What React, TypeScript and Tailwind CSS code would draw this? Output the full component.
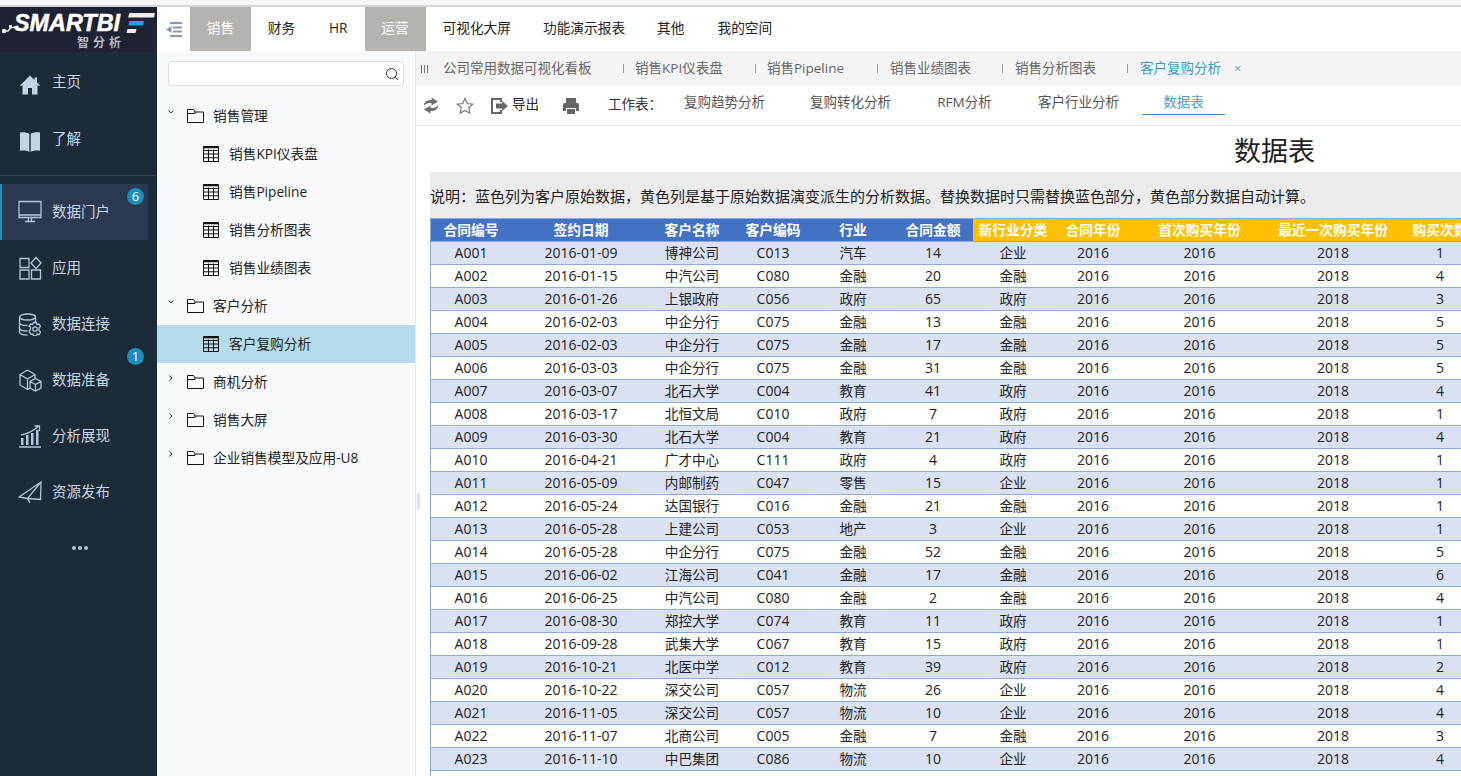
import React from "react";

const FONT = { fontFamily: '"Open Sans","Noto Sans CJK SC",sans-serif' };

const raw = `A001|01-09|博神公司|C013|汽车|14|企业|1
A002|01-15|中汽公司|C080|金融|20|金融|4
A003|01-26|上银政府|C056|政府|65|政府|3
A004|02-03|中企分行|C075|金融|13|金融|5
A005|02-03|中企分行|C075|金融|17|金融|5
A006|03-03|中企分行|C075|金融|31|金融|5
A007|03-07|北石大学|C004|教育|41|政府|4
A008|03-17|北恒文局|C010|政府|7|政府|1
A009|03-30|北石大学|C004|教育|21|政府|4
A010|04-21|广才中心|C111|政府|4|政府|1
A011|05-09|内邮制药|C047|零售|15|企业|1
A012|05-24|达国银行|C016|金融|21|金融|1
A013|05-28|上建公司|C053|地产|3|企业|1
A014|05-28|中企分行|C075|金融|52|金融|5
A015|06-02|江海公司|C041|金融|17|金融|6
A016|06-25|中汽公司|C080|金融|2|金融|4
A017|08-30|郑控大学|C074|教育|11|政府|1
A018|09-28|武集大学|C067|教育|15|政府|1
A019|10-21|北医中学|C012|教育|39|政府|2
A020|10-22|深交公司|C057|物流|26|企业|4
A021|11-05|深交公司|C057|物流|10|企业|4
A022|11-07|北商公司|C005|金融|7|金融|3
A023|11-10|中巴集团|C086|物流|10|企业|4`;
const rows = raw.split("\n").map((l) => l.split("|"));

const S = { fill: "none", stroke: "#b3c6da", strokeWidth: 1.3 } as const;
const Ic = ({ children }: { children: React.ReactNode }) => (
  <svg width="24" height="24" viewBox="0 0 24 24" className="shrink-0">{children}</svg>
);

const navIcons: Record<string, React.ReactNode> = {
  home: <Ic><path d="M12 2.500 2 12.500l.8.8L4.500 12v9.500h5.500V15h4v6.500h5.500V12l1.700 1.300.8-.8-3-2.900V4.500h-2.500v2.600z" fill="#c3d3e4" /></Ic>,
  book: <Ic><path d="M2 2.500c3.500-.6 7 0 9.300 1.200V22C9 20.800 5.500 20.300 2 20.800zM22 2.500c-3.500-.6-7 0-9.300 1.200V22c2.300-1.200 5.800-1.700 9.300-1.200z" fill="#c3d3e4" /></Ic>,
  monitor: <Ic><path d="M1 1.500h22v16H1zM1 15h22M7 21.500h10M10.500 18v3.500M13.500 18v3.500" {...S} /></Ic>,
  apps: <Ic><g {...S}><path d="M2 2.500h9v9H2zM2 14h9v9H2zM13.500 14h9v9h-9zM18 1.500l5 5.500-5 5.500-5-5.500z" /></g></Ic>,
  db: <Ic><g {...S}><ellipse cx="9.500" cy="5" rx="8" ry="3" /><path d="M1.500 5v15c0 1.700 3.500 3 8 3M1.500 10.500c0 1.700 3.500 3 8 3M1.500 16c0 1.700 3.500 3 8 3M17.500 5v5" /><circle cx="17" cy="17" r="2.200" /><path d="M15.500 10.500h3l.5 2 2-.5 1.500 2.500-1.500 1.500v2.500l1.500 1.500-1.500 2.500-2-.5-.5 2h-3l-.5-2-2 .5L11 19l1.500-1.500V15L11 14.500l1.500-2.500 2 .5z" /></g></Ic>,
  box: <Ic><g {...S}><path d="M9.500 2 17 6.500V10M9.500 2 2 6.500v10.500l7.500 4.500 2-1.200M2 6.500l7.500 4.500 7.500-4.500M9.500 11v10.500M17.500 10.500l5.500 3v6.500l-5.500 3-5.500-3v-6.500zM12 13.500l5.500 3 5.500-3M17.500 16.500v6.500" /></g></Ic>,
  chart: <Ic><g fill="#b3c6da"><rect x="3" y="14" width="2.500" height="7" /><rect x="8" y="11" width="2.500" height="10" /><rect x="13" y="9" width="2.500" height="12" /><rect x="18" y="6" width="2.500" height="15" /></g><path d="M1 23h22M3 11c6-1 12-4 18-9M16.500 2H21.500V7" {...S} /></Ic>,
  send: <Ic><path d="M23 2 1 17l8.500 1.500L22.500 19.500zM23 2 9.500 18.500 12 23" {...S} /></Ic>,
};

const items = [
  ["monitor", "数据门户", "6"],
  ["apps", "应用"],
  ["db", "数据连接"],
  ["box", "数据准备", "1"],
  ["chart", "分析展现"],
  ["send", "资源发布"],
];

function NavItem({ icon, label, badge, active, h, drop }: { icon: string; label: string; badge?: string; active?: boolean; h: string; drop?: boolean }) {
  return (
    <div className={`relative flex items-center gap-[10px] pl-[18px] text-[14.500px] text-[#c9d5e2] ${h} ${active ? "w-[148px] bg-[#2a3850] border-l-2 border-[#1f8fc0] !pl-[16px]" : ""}`}>
      <span className={`flex ${drop ? "mt-[4px]" : ""}`}>{navIcons[icon]}</span>
      <span className="-mt-px">{label}</span>
      {badge && (
        <span className={`absolute left-[127px] flex h-[17px] w-[17px] items-center justify-center rounded-full bg-[#1b8ebf] text-[13px] text-white ${active ? "top-[4px] !left-[125px]" : "top-[-4px]"}`}>{badge}</span>
      )}
    </div>
  );
}

const Folder = () => (
  <svg width="17" height="14" viewBox="0 0 17 14" className="shrink-0"><path d="M.5 13.500V.5h6l1.500 2.500h8.500v10.500zM.5 4.500h7.500L8 3" fill="none" stroke="#111" strokeWidth="1" /></svg>
);
const GridIc = () => (
  <svg width="16" height="16" viewBox="0 0 16 16" className="shrink-0"><path d="M.5.5h15v15H.5zM.5 4.500h15M.5 8h15M.5 11.750h15M5.500 3.500v12M10.500 3.500v12" fill="none" stroke="#111" strokeWidth="1" /><path d="M.5 1.500h15" stroke="#111" strokeWidth="1.500" /></svg>
);
const Chev = ({ open }: { open?: boolean }) => (
  <svg width="8" height="8" viewBox="0 0 8 8" className="shrink-0">
    {open ? <path d="M1.500 2.500 4 5l2.500-2.500" fill="none" stroke="#333" strokeWidth="1" /> : <path d="M2.500 1.500 5 4 2.500 6.500" fill="none" stroke="#333" strokeWidth="1" />}
  </svg>
);

function FolderRow({ label, open }: { label: string; open?: boolean }) {
  return (
    <div className="flex h-[38px] items-center pl-[10px] text-[13.700px] text-[#222]">
      <span className="-mt-[9px] mr-[12px] flex"><Chev open={open} /></span>
      <Folder />
      <span className="ml-[9px]">{label}</span>
    </div>
  );
}
function LeafRow({ label, active }: { label: string; active?: boolean }) {
  return (
    <div className={`flex h-[38px] items-center gap-[10px] pl-[46px] text-[13.700px] text-[#222] ${active ? "bg-[#b5dcea]" : ""}`}>
      <GridIc />
      <span>{label}</span>
    </div>
  );
}

const topTabs: [string, string, boolean?][] = [
  ["销售", "px-[16.800px]", true],
  ["财务", "px-[16.800px]"],
  ["HR", "px-[17px]"],
  ["运营", "px-[16.800px]", true],
  ["可视化大屏", "pl-[17px] pr-[16px]"],
  ["功能演示报表", "px-[16px]"],
  ["其他", "pl-[16px] pr-[17px]"],
  ["我的空间", "px-[16px]"],
];
const docTabs: [string, string, string][] = [
  ["公司常用数据可视化看板", "w-[149px]", "mr-[11px]"],
  ["销售KPI仪表盘", "w-[89px]", "mr-[11px]"],
  ["销售Pipeline", "w-[79px]", "mr-[12px]"],
  ["销售业绩图表", "w-[81px]", "mr-[12px]"],
  ["销售分析图表", "w-[81px]", "mr-[12px]"],
];
const headA = ["合同编号", "签约日期", "客户名称", "客户编码", "行业", "合同金额"];
const headB = ["新行业分类", "合同年份", "首次购买年份", "最近一次购买年份", "购买次数"];
const widths = [80, 140, 82, 80, 80, 80, 80, 80, 133, 134, 80];
const td = "border-b border-[#8ea9db] p-0 pb-px leading-[20px]";
const tdc = "border-b border-[#8ea9db] p-0 pb-px leading-[20px] text-[13.600px]";

export default function App() {
  return (
    <div style={FONT} className="relative flex h-[776px] w-[1461px] flex-col overflow-hidden bg-white [text-spacing-trim:space-all]">
      <div className="h-[7px] shrink-0 border-b-2 border-[#d6d6d6] bg-[#f8f8f8]" />
      <div className="flex min-h-0 flex-1">
        {/* sidebar */}
        <aside className="flex w-[157px] shrink-0 flex-col bg-[#1c2b38]">
          <div className="h-[45px] shrink-0 bg-[#1e2233]">
            <svg width="157" height="45" viewBox="0 0 157 45">
              <text x="14" y="24" fill="#fff" stroke="#fff" strokeWidth=".5" fontSize="23" fontWeight="700" fontStyle="italic" fontFamily="Liberation Sans, sans-serif" textLength="106" lengthAdjust="spacingAndGlyphs">SMARTBI</text>
              <path d="M3 24h5l3-3.500h4" fill="none" stroke="#e6e6e6" strokeWidth="1.500" />
              <rect x="2" y="22" width="4" height="4" rx="1" fill="#eee" />
              <rect x="9" y="18" width="3" height="3" rx="1" fill="#eee" />
              <path d="M129.500 6h25.500l-1 4.500h-26z" fill="#eee" />
              <path d="M129.500 14h14.500l-1 4.500h-14.500z" fill="#14a5e8" />
              <path d="M127.500 22h9l-1 4h-9z" fill="#eee" />
              <text x="77" y="40" fill="#b9bcc4" fontSize="12" fontWeight="700" letterSpacing="4" fontFamily="Noto Sans CJK SC, sans-serif">智分析</text>
            </svg>
          </div>
          <div className="mt-[2px]">
            <NavItem icon="home" label="主页" h="h-[57px]" drop />
            <NavItem icon="book" label="了解" h="h-[57px]" drop />
          </div>
          <div className="mt-[7px] mb-[8px] h-px bg-[#33424f]" />
          {items.map(([i, l, b], n) => (
            <NavItem key={l} icon={i} label={l} badge={b} active={n === 0} h="h-[56px]" />
          ))}
          <div className="flex h-[56px] items-center justify-center gap-[2px] pl-[3px]">
            {[0, 1, 2].map((i) => <span key={i} className="h-[4px] w-[4px] rounded-full bg-[#b3c6da]" />)}
          </div>
        </aside>

        <div className="flex min-w-0 flex-1 flex-col">
          {/* top nav */}
          <div className="flex h-[44px] shrink-0 items-stretch">
            <div className="flex w-[33px] items-center justify-center">
              <svg width="16" height="17" viewBox="0 0 16 17"><path d="M4 2h12M7 6.500h9M7 10.500h9M4 15h12" stroke="#8a96ab" strokeWidth="2.200" /><path d="M5.500 5v7L0 8.500z" fill="#8a96ab" /></svg>
            </div>
            {topTabs.map(([t, p, on]) => (
              <div key={t} className={`flex items-center pb-px text-[13.700px] ${p} ${on ? "bg-[#b5b3b0] text-white" : "text-[#222]"}`}>{t}</div>
            ))}
          </div>

          <div className="flex min-h-0 flex-1">
            {/* tree */}
            <div className="w-[258px] shrink-0 bg-[#f8f9fb]">
              <div className="px-[11px] pt-[10px] pb-[11px]">
                <div className="flex h-[25px] w-[236px] items-center justify-end rounded-[4px] border border-[#dcdcdc] bg-white pr-[4px]">
                  <svg width="14" height="14" viewBox="0 0 14 14"><circle cx="6.500" cy="6.500" r="5" fill="none" stroke="#333" /><path d="m10 10 3 3" stroke="#333" /></svg>
                </div>
              </div>
              <FolderRow label="销售管理" open />
              <LeafRow label="销售KPI仪表盘" />
              <LeafRow label="销售Pipeline" />
              <LeafRow label="销售分析图表" />
              <LeafRow label="销售业绩图表" />
              <FolderRow label="客户分析" open />
              <LeafRow label="客户复购分析" active />
              <FolderRow label="商机分析" />
              <FolderRow label="销售大屏" />
              <FolderRow label="企业销售模型及应用-U8" />
            </div>

            {/* main */}
            <div className="relative min-w-0 flex-1 border-l border-[#e8e8e8]">
              <span className="absolute left-px top-[442px] h-[17px] w-[3px] bg-[#e2e2e2]" />
              <div className="flex h-[35px] items-center bg-[#f4f4f4] text-[13.500px] text-[#666]">
                <span className="ml-[5px] mr-[15px] flex gap-[2px]">
                  {[0, 1, 2].map((i) => <span key={i} className="h-[8px] w-px bg-[#777]" />)}
                </span>
                {docTabs.map(([t, w, m]) => (
                  <React.Fragment key={t}>
                    <span className={`whitespace-nowrap ${w}`}>{t}</span>
                    <span className={`ml-[31px] h-[9px] w-px bg-[#999] ${m}`} />
                  </React.Fragment>
                ))}
                <span className="text-[#3a9cc5]">客户复购分析</span>
                <span className="ml-[13px] text-[13px] text-[#7aa9c0]">×</span>
              </div>

              <div className="flex h-[40px] items-center border-b border-[#e8e8e8] text-[13.500px]">
                <svg width="16" height="17" viewBox="0 0 16 17" className="ml-[7px]"><g fill="#6e6e6e"><path d="M1 8.500C1 4.500 4 3 8.500 3V.5L15 4.500 8.500 8.500V6C5 6 2.500 6.500 1 8.500z" /><path d="M15 8.500C15 12.500 12 14 7.500 14v2.500L1 12.500 7.500 8.500V11c3.500 0 6-.5 7.500-2.500z" /></g></svg>
                <svg width="18" height="18" viewBox="0 0 18 18" className="ml-[17px]"><path d="m9 1.500 2.300 5 5.400.6-4 3.700 1.100 5.400L9 13.500l-4.800 2.700 1.100-5.400-4-3.700 5.400-.6z" fill="none" stroke="#777" strokeWidth="1.200" /></svg>
                <svg width="18" height="18" viewBox="0 0 18 18" className="ml-[16px]"><path d="M12 1H1v16h11v-4h-2v2H3V3h7v2h2z" fill="#666" /><path d="M6 6.500h6V4l6 5-6 5v-2.500H6z" fill="#666" /></svg>
                <span className="-mt-[2px] ml-[4px] text-[#222]">导出</span>
                <svg width="18" height="18" viewBox="0 0 18 18" className="ml-[23px]"><path d="M4 1h10v5H4zM2.500 6h13A1.500 1.500 0 0 1 17 7.500V14h-3v-3H4v3H1V7.500A1.500 1.500 0 0 1 2.500 6zM5 12h8v5H5z" fill="#666" /></svg>
                <span className="-mt-[2px] ml-[28px] text-[#333]">工作表：</span>
                <div className="flex items-center self-start pt-[5px] text-[#555]">
                  <span className="ml-[22px] h-[24px] leading-[22px]">复购趋势分析</span>
                  <span className="ml-[45px] h-[24px] leading-[22px]">复购转化分析</span>
                  <span className="ml-[45px] h-[24px] w-[57px] text-center leading-[22px]">RFM分析</span>
                  <span className="ml-[45px] h-[24px] leading-[22px]">客户行业分析</span>
                  <span className="ml-[23px] h-[24px] w-[83px] border-b-[1.500px] border-[#2f8fc0] text-center leading-[22px] text-[#4a9fd0]">数据表</span>
                </div>
              </div>

              <div className="flex h-[46px] items-center pl-[818px] pt-[2px] text-[27px] leading-none text-[#222]">数据表</div>
              <div className="ml-[14px] flex h-[46px] items-center bg-[#ebebeb] pt-[3px] text-[15px] whitespace-nowrap text-[#222]">
                说明：蓝色列为客户原始数据，黄色列是基于原始数据演变派生的分析数据。替换数据时只需替换蓝色部分，黄色部分数据自动计算。
              </div>
              <div className="ml-[14px] h-full border-l border-[#8ea9db]">
                <table className="table-fixed border-collapse" style={{ width: 1049 }}>
                  <colgroup>
                    {widths.map((w, i) => <col key={i} style={{ width: w }} />)}
                  </colgroup>
                  <thead>
                    <tr className="h-[23px] text-[13.750px] text-white">
                      {headA.map((h) => <th key={h} className="border-y border-[#8ea9db] bg-[#4472c4] p-0 font-bold whitespace-nowrap">{h}</th>)}
                      {headB.map((h) => <th key={h} className="border-y border-[#8ea9db] bg-[#ffc000] p-0 font-bold whitespace-nowrap">{h}</th>)}
                    </tr>
                  </thead>
                  <tbody>
                    {rows.map((r, i) => (
                      <tr key={r[0]} className={`h-[23px] text-center text-[14px] text-[#222] ${i % 2 === 0 ? "bg-[#d9e1f2]" : "bg-white"}`}>
                        <td className={td}>{r[0]}</td>
                        <td className={td}>2016-{r[1]}</td>
                        <td className={tdc}>{r[2]}</td>
                        <td className={td}>{r[3]}</td>
                        <td className={tdc}>{r[4]}</td>
                        <td className={td}>{r[5]}</td>
                        <td className={tdc}>{r[6]}</td>
                        <td className={td}>2016</td>
                        <td className={td}>2016</td>
                        <td className={td}>2018</td>
                        <td className={td}>{r[7]}</td>
                      </tr>
                    ))}
                  </tbody>
                </table>
              </div>
            </div>
          </div>
        </div>
      </div>
    </div>
  );
}
